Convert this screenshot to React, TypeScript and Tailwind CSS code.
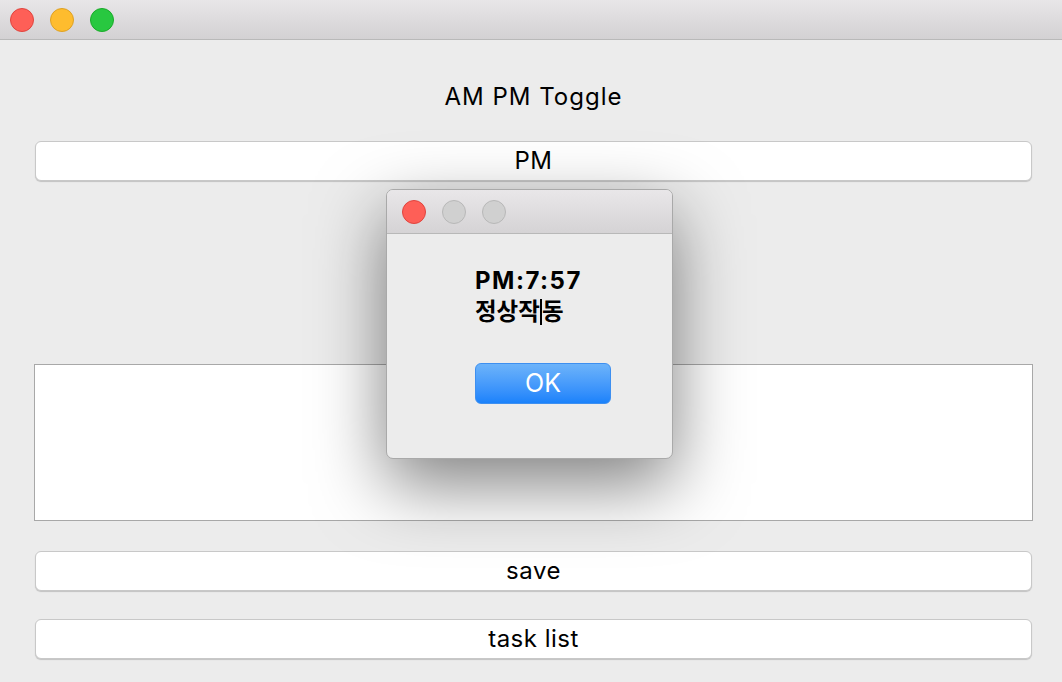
import React from "react";

const font = { fontFamily: "Inter, 'Noto Sans CJK KR', sans-serif" };

function Btn({ label }: { label: string }) {
  return (
    <div className="h-[40px] w-full rounded-[6px] bg-white border border-[#c8c8c8] shadow-[0_1px_1px_rgba(0,0,0,0.18)] flex items-center justify-center text-[24px] tracking-[0.5px] text-black">
      {label}
    </div>
  );
}

export default function App() {
  return (
    <div className="relative w-[1062px] h-[682px] bg-[#ececec] overflow-hidden" style={font}>
      <div className="h-[40px] bg-gradient-to-b from-[#e8e6e8] to-[#d3d1d3] border-b border-[#b9b9b9] flex items-center gap-[16px] pl-[10px]">
        <div className="w-[24px] h-[24px] rounded-full bg-[#fe5f57] border border-[#e0443e]" />
        <div className="w-[24px] h-[24px] rounded-full bg-[#febc2e] border border-[#dea123]" />
        <div className="w-[24px] h-[24px] rounded-full bg-[#28c840] border border-[#1aab29]" />
      </div>
      <div className="flex flex-col pl-[35px] pr-[30px] pt-[39px]">
        <div className="text-center text-[24px] tracking-[1px] leading-[36px] text-black">AM PM Toggle</div>
        <div className="mt-[26px]">
          <Btn label="PM" />
        </div>
        <div className="mt-[183px] -mx-[1px] h-[157px] bg-white border border-[#a8a8a8]" />
        <div className="mt-[30px]">
          <Btn label="save" />
        </div>
        <div className="mt-[28px]">
          <Btn label="task list" />
        </div>
      </div>

      <div className="absolute left-[386px] top-[189px] w-[287px] h-[270px] rounded-[7px] bg-[#ececec] border border-[#a9a9a9] shadow-[0_25px_70px_rgba(0,0,0,0.5)] overflow-hidden flex flex-col">
        <div className="h-[44px] bg-gradient-to-b from-[#e9e7e9] to-[#d5d3d5] border-b border-[#b8b8b8] flex items-center gap-[16px] pl-[15px]">
          <div className="w-[24px] h-[24px] rounded-full bg-[#fe5f57] border border-[#e0443e]" />
          <div className="w-[24px] h-[24px] rounded-full bg-[#d0d0d0] border border-[#b8b8b8]" />
          <div className="w-[24px] h-[24px] rounded-full bg-[#d0d0d0] border border-[#b8b8b8]" />
        </div>
        <div className="pl-[88px] pt-[31px] font-bold leading-[31px] text-black">
          <div className="text-[24px] tracking-[1.5px]">PM:7:57</div>
          <div className="flex items-center text-[23.5px]">
            <span>정상작</span>
            <span className="w-[2px] h-[26px] bg-black" />
            <span>동</span>
          </div>
        </div>
        <div className="pl-[88px] mt-[36px]">
          <div className="w-[136px] h-[41px] rounded-[6px] bg-gradient-to-b from-[#6cb3fa] to-[#1a82fb] border border-[#3d8ff0] flex items-center justify-center text-white text-[25px]">
            OK
          </div>
        </div>
      </div>
    </div>
  );
}
